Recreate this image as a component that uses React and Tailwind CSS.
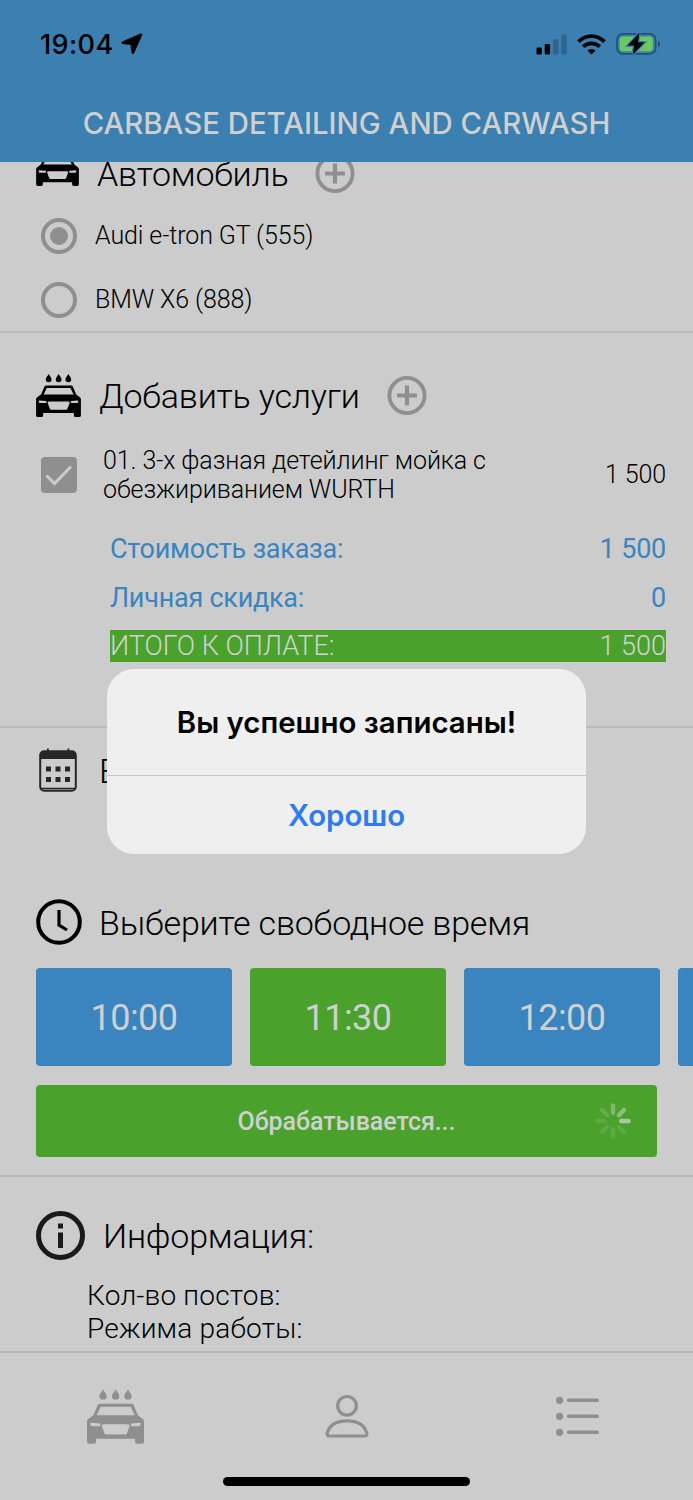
import React from 'react'

const times = [
  { label: '10:00' },
  { label: '11:30', active: true },
  { label: '12:00' },
  { label: '' },
]

const cars = [
  { name: 'Audi e-tron GT (555)', checked: true },
  { name: 'BMW X6 (888)', checked: false },
]

function CarIcon({ drops = true, className }) {
  return (
    <svg viewBox={drops ? '0 0 171 164' : '0 44 171 120'} className={className} fill="currentColor">
      {drops && (
        <path d="M48 0C52 8 59 14 59 21a11 10 0 0 1-22 0C37 14 44 8 48 0zM86 0C90 8 97 14 97 21a11 10 0 0 1-22 0C75 14 82 8 86 0zM123 0C127 8 134 14 134 21a11 10 0 0 1-22 0C112 14 119 8 123 0z" />
      )}
      <path
        fillRule="evenodd"
        d="M38 44H134q4 0 6 4L153 78L168 90q3 3 3 7V157q0 7-7 7H151q-7 0-7-7V149H27V157q0 7-7 7H7q-7 0-7-7V97q0-4 3-7L19 78L32 48q2-4 6-4zM41 53L29 78H143L131 53zM13 101L37 103q3 0 3 3V108q0 3-3 3H17q-7 0-7-6q0-4 3-4zM158 101L135 103q-3 0-3 3V108q0 3 3 3H154q7 0 7-6q0-4-3-4zM50 105Q43 105 44 110L52 132Q53 136 57 136H115Q119 136 120 132L128 110Q129 105 122 105z"
      />
    </svg>
  )
}

function AddButton() {
  return (
    <button className="shrink-0 text-[#8f8f8f]">
      <svg width="40" height="40" viewBox="0 0 40 40" fill="none" stroke="currentColor">
        <circle cx="20" cy="20.500" r="17.600" strokeWidth="3.900" />
        <path d="M20 10.500v20M10 20.500h20" strokeWidth="4.200" />
      </svg>
    </button>
  )
}

function CalendarIcon() {
  return (
    <svg width="38" height="44" viewBox="0 0 38 44" className="text-[#262626]">
      <rect x="1.2" y="3.2" width="35.6" height="39.6" rx="4" fill="none" stroke="currentColor" strokeWidth="2" />
      <path d="M1.2 11V7q0-4 4-4h27.600q4 0 4 4v4zM8 0.500h1.800v4h-1.800zM28.500 0.500h1.800v4h-1.800z" fill="currentColor" />
      <path d="M2 40.500h34" stroke="currentColor" strokeWidth="1.400" />
      <path d="M7 18.500h5v5h-5zM16.500 18.500h5v5h-5zM26 18.500h5v5h-5zM7 29h5v5h-5zM16.500 29h5v5h-5zM26 29h5v5h-5z" fill="currentColor" />
    </svg>
  )
}

function Spinner() {
  // opacity of each blade, clockwise from the top
  const blades = [0.4, 0.5, 0.7, 0.13, 0.13, 0.13, 0.13, 0.2]
  return (
    <svg width="36" height="36" viewBox="-18 -18 36 36" stroke="#d6d6d6" strokeWidth="4.400" strokeLinecap="round">
      {blades.map((opacity, i) => (
        <path key={i} d="M0 -8.200V-15.600" transform={`rotate(${i * 45})`} strokeOpacity={opacity} />
      ))}
    </svg>
  )
}

function StatusBar() {
  return (
    <div className="flex h-[88px] items-center justify-between pl-10 pr-[33px] font-['Inter',sans-serif]">
      <div className="flex items-center gap-[7px]">
        <span className="text-[27px] font-[550] leading-none tracking-[0.4px] text-black">19:04</span>
        <svg width="22" height="22" viewBox="0 0 22 22">
          <path d="M20 1.800L1.800 9.800L10.600 10.800L11.900 19.800z" fill="#000" stroke="#000" strokeWidth="2.600" strokeLinejoin="round" />
        </svg>
      </div>
      <div className="flex items-center">
        <svg width="31" height="21" viewBox="0 0 31 21">
          <rect x="0.500" y="13.500" width="5.400" height="7" rx="1.300" />
          <rect x="8.700" y="10" width="5.400" height="10.500" rx="1.300" />
          <rect x="17" y="5.300" width="5.400" height="15.200" rx="1.300" fill="#2f648c" />
          <rect x="25.300" y="0.500" width="5.400" height="20" rx="1.300" fill="#2f648c" />
        </svg>
        <svg width="29" height="21" viewBox="0 0 29 21" className="ml-[10px]" fill="none" stroke="#000" strokeWidth="3.800">
          <path d="M1.500 7.700Q7.300 2.200 14.500 2.200T27.500 7.700" />
          <path d="M6.200 12.700Q9.800 9.300 14.500 9.300T22.800 12.700" />
          <path d="M14.500 20.500L10.400 16.500Q14.500 13.300 18.600 16.500z" fill="#000" stroke="none" />
        </svg>
        <svg width="44" height="24" viewBox="0 0 44 24" className="ml-[10px]">
          <rect x="1" y="1.900" width="38.600" height="20" rx="6" fill="none" stroke="#255070" strokeWidth="1.700" />
          <rect x="3.700" y="4.600" width="33.200" height="14.600" rx="3.500" fill="#67c960" />
          <path d="M42 8.500q2 1 2 3.400t-2 3.400z" fill="#255070" />
          <path d="M23.400 0.800L11.600 13.600H18L16.800 22.800L28.600 10.200H22z" fill="#000" stroke="#3c7fb1" strokeWidth="2.600" paintOrder="stroke" />
        </svg>
      </div>
    </div>
  )
}

function SectionTitle({ icon, children, add, className = '' }) {
  return (
    <div className={`flex h-[50px] items-center pb-0.5 text-[34px] font-light tracking-[-0.2px] text-black ${className}`}>
      {icon}
      <h2 className="whitespace-nowrap pt-px leading-none">{children}</h2>
      {add && (
        <div className="ml-[27px] flex">
          <AddButton />
        </div>
      )}
    </div>
  )
}

function Alert() {
  return (
    <div className="absolute left-[107px] top-[669px] flex h-[185px] w-[479px] flex-col overflow-hidden rounded-[27px] bg-[#efefef] font-['Inter',sans-serif] text-[29.4px] font-semibold">
      <p className="flex h-[107px] items-center justify-center border-b border-[#c6c6c6] pt-0.5 text-black">Вы успешно записаны!</p>
      <button className="flex-1 pt-[3px] text-[#2e7bf6]">Хорошо</button>
    </div>
  )
}

export default function App() {
  return (
    <div className="relative flex h-[1500px] w-[693px] flex-col overflow-hidden bg-[#cccccc] font-['Roboto',sans-serif] text-black">
      {/* Header */}
      <header className="h-[162px] shrink-0 bg-[#3c7fb1]">
        <StatusBar />
        <h1 className="flex h-[70px] items-center justify-center whitespace-nowrap pt-0.5 font-['Inter',sans-serif] text-[29.35px] font-medium text-[#cfcfcf]">
          CARBASE DETAILING AND CARWASH
        </h1>
      </header>

      <main className="h-[1189px] shrink-0 overflow-hidden">
        {/* Автомобиль */}
        <section className="-mt-[13px] h-[184px] border-b-2 border-[#bababa] pl-9">
          <SectionTitle add icon={<CarIcon drops={false} className="mr-[18px] mt-[-4px] h-[30px] w-[43px]" />}>
            Автомобиль
          </SectionTitle>
          <div className="pl-[5px] pt-[5px]">
            {cars.map((car) => (
              <label key={car.name} className="flex h-16 items-center gap-[18px] pb-px text-[25px] font-light tracking-[-0.1px]">
                <span className="flex size-9 items-center justify-center rounded-full border-4 border-[#8f8f8f]">
                  {car.checked && <span className="size-[18px] rounded-full bg-[#8f8f8f]" />}
                </span>
                {car.name}
              </label>
            ))}
          </div>
        </section>

        {/* Услуги */}
        <section className="h-[395px] border-b-2 border-[#bababa] pl-9 pr-[27px] pt-[38px]">
          <SectionTitle add icon={<CarIcon className="mr-[18px] h-[43px] w-[45px]" />}>
            Добавить услуги
          </SectionTitle>
          <div className="mt-[24px] flex h-[60px] items-center pb-px pl-[5px] text-[25px] font-light leading-[29px] tracking-[-0.1px]">
            <span className="flex size-9 items-center justify-center rounded bg-[#8f8f8f]">
              <svg width="28" height="22" viewBox="0 0 28 22" fill="none" stroke="#cccccc" strokeWidth="3">
                <path d="M1.500 11.500L9.500 19.500L26 2.500" />
              </svg>
            </span>
            <p className="ml-[26px] flex-1">
              01. 3-х фазная детейлинг мойка с<br />обезжириванием WURTH
            </p>
            <span>1 500</span>
          </div>
          <div className="ml-[74px] mt-[19px] text-[27px] text-[#3a85bf]">
            <div className="flex h-[49px] items-center justify-between pt-px tracking-[-0.25px]">
              <span>Стоимость заказа:</span>
              <span>1 500</span>
            </div>
            <div className="flex h-[49px] items-center justify-between pt-px tracking-[-0.25px]">
              <span>Личная скидка:</span>
              <span>0</span>
            </div>
            <div className="mt-[8px] flex h-8 items-center justify-between bg-[#4aa22d] pt-px font-light text-[#d2d2d2]">
              <span>ИТОГО К ОПЛАТЕ:</span>
              <span>1 500</span>
            </div>
          </div>
        </section>

        {/* Дата и время */}
        <section className="h-[449px] border-b-2 border-[#bababa] pl-9 pt-[18px]">
          <SectionTitle icon={<span className="ml-[3px] mr-[22px]"><CalendarIcon /></span>}>
            Выберите дату
          </SectionTitle>
          <SectionTitle
            className="mt-[102px]"
            icon={
              <svg width="46" height="46" viewBox="0 0 46 46" fill="none" stroke="#000" strokeWidth="4" className="mr-[17px]">
                <circle cx="23" cy="23" r="20.800" />
                <path d="M23 11V26L31 31" strokeWidth="3.200" />
              </svg>
            }
          >
            Выберите свободное время
          </SectionTitle>
          <div className="mt-[20px] flex gap-[18px] overflow-hidden">
            {times.map((time, i) => (
              <button
                key={i}
                className={`h-[98px] w-[196px] shrink-0 rounded pt-0.5 text-[36px] tracking-[-0.5px] text-[#d0d0d0] ${time.active ? 'bg-[#4aa22d]' : 'bg-[#3a85bf]'}`}
              >
                {time.label}
              </button>
            ))}
          </div>
          <button className="mt-[19px] flex h-[72px] w-[621px] items-center rounded bg-[#4aa22d] pr-[26px] text-[25px] font-medium tracking-[-0.05px] text-[#d0d0d0]">
            <span className="flex-1 pl-[62px] pt-0.5 text-center">Обрабатывается...</span>
            <Spinner />
          </button>
        </section>

        {/* Информация */}
        <section className="pl-9 pt-[34px]">
          <SectionTitle
            icon={
              <svg width="49" height="49" viewBox="0 0 49 49" className="mr-[18px] shrink-0" fill="#1a1a1a">
                <circle cx="24.500" cy="24.500" r="22" fill="none" stroke="#1a1a1a" strokeWidth="5" />
                <path d="M22 12.500h5v5h-5zM22 21.500h5v15.500h-5z" />
              </svg>
            }
          >
            Информация:
          </SectionTitle>
          <div className="ml-[51px] mt-[18px] text-[28px] font-light leading-[33px] tracking-[0.2px]">
            <p>Кол-во постов:</p>
            <p>Режима работы:</p>
          </div>
        </section>
      </main>

      {/* Tab bar */}
      <nav className="flex h-[126px] shrink-0 border-t-2 border-[#b6b6b6] text-[#8f8f8f]">
        <div className="flex flex-1 justify-center pt-[36px]">
          <CarIcon className="h-[55px] w-[57px]" />
        </div>
        <div className="flex flex-1 justify-center pt-[41px]">
          <svg width="44" height="44" viewBox="0 0 44 44" fill="none" stroke="currentColor" strokeWidth="3.200">
            <circle cx="22" cy="11.800" r="9.300" />
            <path d="M4 42Q1.800 42 2.200 39C4.500 31 12 26.800 22 26.800S39.500 31 41.800 39Q42.200 42 40 42z" />
          </svg>
        </div>
        <div className="flex flex-1 justify-center pt-[43px]">
          <svg width="43" height="40" viewBox="0 0 43 40" stroke="currentColor" strokeWidth="3.400" strokeLinecap="round">
            <path d="M12.500 4.300h28.800M12.500 20.300h28.800M12.500 36.300h28.800" />
            <path d="M3.600 4.300h0M3.600 20.300h0M3.600 36.300h0" strokeWidth="7.200" />
          </svg>
        </div>
      </nav>
      <div className="mx-auto h-[9px] w-[247px] shrink-0 rounded-full bg-black" />

      <Alert />
    </div>
  )
}
